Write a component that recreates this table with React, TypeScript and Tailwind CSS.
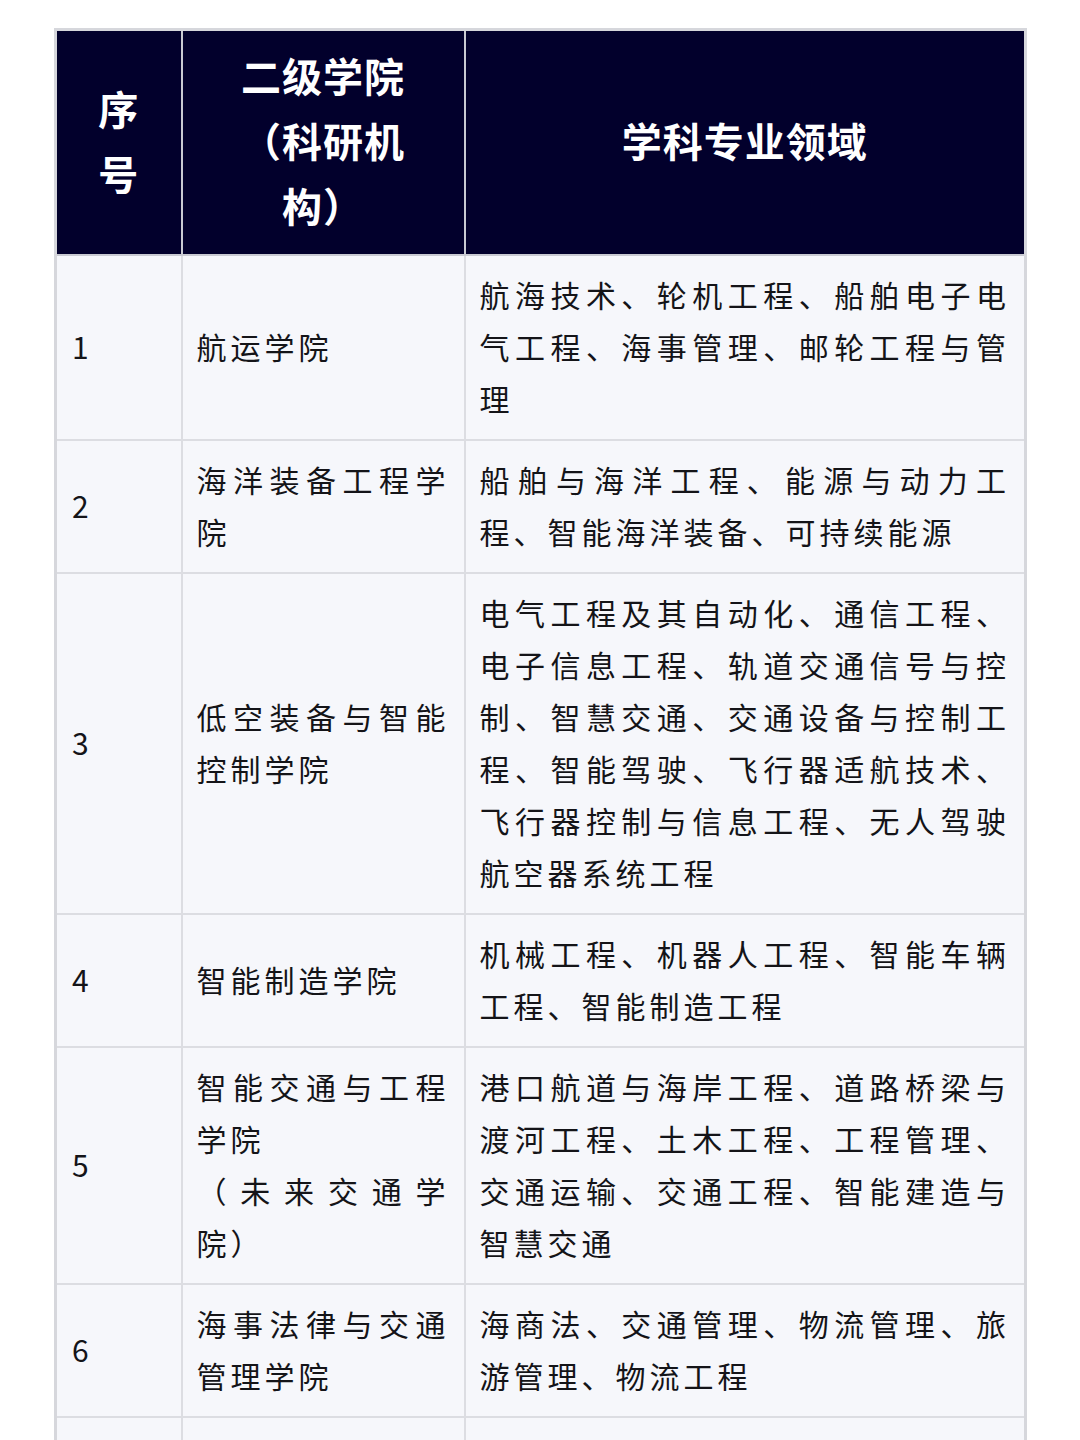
import React from "react";

type Row = { no: string; college: React.ReactNode; fields: string };

const rows: Row[] = [
  {
    no: "1",
    college: "航运学院",
    fields: "航海技术、轮机工程、船舶电子电气工程、海事管理、邮轮工程与管理",
  },
  {
    no: "2",
    college: "海洋装备工程学院",
    fields: "船舶与海洋工程、能源与动力工程、智能海洋装备、可持续能源",
  },
  {
    no: "3",
    college: "低空装备与智能控制学院",
    fields:
      "电气工程及其自动化、通信工程、电子信息工程、轨道交通信号与控制、智慧交通、交通设备与控制工程、智能驾驶、飞行器适航技术、飞行器控制与信息工程、无人驾驶航空器系统工程",
  },
  {
    no: "4",
    college: "智能制造学院",
    fields: "机械工程、机器人工程、智能车辆工程、智能制造工程",
  },
  {
    no: "5",
    college: (
      <>
        智能交通与工程学院
        <br />
        （未来交通学院）
      </>
    ),
    fields:
      "港口航道与海岸工程、道路桥梁与渡河工程、土木工程、工程管理、交通运输、交通工程、智能建造与智慧交通",
  },
  {
    no: "6",
    college: "海事法律与交通管理学院",
    fields: "海商法、交通管理、物流管理、旅游管理、物流工程",
  },
];

const font = { fontFamily: '"Noto Sans CJK SC", "Noto Sans", sans-serif' };

export default function App() {
  return (
    <div className="h-[1440px] bg-white pt-[28px] overflow-hidden" style={font}>
      <table className="ml-[54px] w-[973px] table-fixed border-collapse border-[3px] border-[#d6d7dc]">
        <colgroup>
          <col className="w-[126px]" />
          <col className="w-[283px]" />
          <col />
        </colgroup>
        <thead>
          <tr className="bg-[#02002c] text-white">
            <th className="border-2 border-[#c9cad2] px-[24px] pt-[12px] pb-[16px] text-[40px] leading-[65px] font-bold tracking-[1px] text-center align-middle">
              序号
            </th>
            <th className="border-2 border-[#c9cad2] px-[48px] pt-[12px] pb-[16px] text-[40px] leading-[65px] font-bold tracking-[1px] text-center align-middle">
              二级学院（科研机构）
            </th>
            <th className="border-2 border-[#c9cad2] px-[24px] pt-[12px] pb-[16px] text-[40px] leading-[65px] font-bold tracking-[1px] text-center align-middle">
              学科专业领域
            </th>
          </tr>
        </thead>
        <tbody className="bg-[#f6f7fb] text-[#141418] text-[30px] leading-[52px]">
          {rows.map((r) => (
            <tr key={r.no}>
              <td className="border-2 border-[#dcdde2] px-[15px] pt-[12px] pb-[15px] align-middle">{r.no}</td>
              <td className="border-2 border-[#dcdde2] px-[14px] pt-[12px] pb-[15px] align-middle text-justify tracking-[4px]">
                {r.college}
              </td>
              <td className="border-2 border-[#dcdde2] px-[14px] pt-[12px] pb-[15px] align-middle text-justify tracking-[4px]">
                {r.fields}
              </td>
            </tr>
          ))}
          <tr>
            <td className="border-2 border-[#dcdde2] h-[132px]"></td>
            <td className="border-2 border-[#dcdde2]"></td>
            <td className="border-2 border-[#dcdde2]"></td>
          </tr>
        </tbody>
      </table>
    </div>
  );
}
